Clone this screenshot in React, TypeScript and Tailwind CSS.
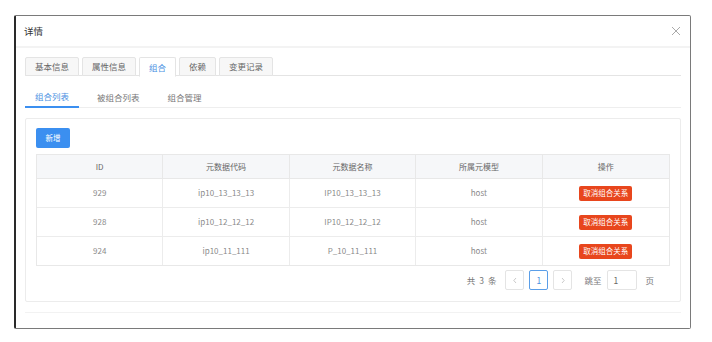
import React from "react";

const font = { fontFamily: '"Noto Sans CJK SC", "Noto Sans", sans-serif' };

const rows = [
  { id: "929", code: "ip10_13_13_13", name: "IP10_13_13_13", model: "host" },
  { id: "928", code: "ip10_12_12_12", name: "IP10_12_12_12", model: "host" },
  { id: "924", code: "ip10_11_111", name: "P_10_11_111", model: "host" },
];

const headers = ["ID", "元数据代码", "元数据名称", "所属元模型", "操作"];

export default function App() {
  return (
    <div className="w-[712px] h-[342px] bg-white overflow-hidden" style={font}>
      <div className="ml-[14px] mt-[15px] w-[677px] h-[314px] bg-white border border-[#7a7a7a] border-l-2 border-l-[#2a2a2a] rounded-[2px] flex flex-col">
        {/* header */}
        <div className="h-[32px] shrink-0 flex items-center justify-between pl-[8px] pr-[8px] border-b-2 border-[#f3f3f3]">
          <span className="text-[9.5px] text-[#333]">详情</span>
          <svg width="10" height="10" viewBox="0 0 10 10" className="mr-[1px]">
            <path d="M1 1 L9 9 M9 1 L1 9" stroke="#aaa" strokeWidth="1" />
          </svg>
        </div>
        {/* body */}
        <div className="flex-1 px-[9px] pt-[9px] flex flex-col">
          {/* card tabs */}
          <div className="flex gap-[3px] border-b border-[#e4e4e4] h-[19px]">
            {["基本信息", "属性信息", "组合", "依赖", "变更记录"].map((t) => {
              const active = t === "组合";
              return (
                <div
                  key={t}
                  className={
                    active
                      ? "px-[9px] h-[20px] flex items-center text-[8.5px] text-[#4a90e2] bg-white border border-[#e4e4e4] border-b-white rounded-t-[2px]"
                      : "px-[9px] h-[19px] flex items-center text-[8.5px] text-[#666] bg-[#f7f7f7] border border-[#e4e4e4] rounded-t-[2px]"
                  }
                >
                  {t}
                </div>
              );
            })}
          </div>
          {/* sub tabs */}
          <div className="mt-[10px] flex gap-[8px] border-b border-[#eeeeee] h-[22px]">
            {["组合列表", "被组合列表", "组合管理"].map((t, i) => (
              <div
                key={t}
                className={
                  i === 0
                    ? "px-[10px] h-[22px] flex items-center text-[8.5px] text-[#4a90e2] border-b-2 border-[#3b8ff0]"
                    : "px-[10px] h-[22px] flex items-center text-[8.5px] text-[#777]"
                }
              >
                {t}
              </div>
            ))}
          </div>
          {/* card */}
          <div className="mt-[10px] h-[184px] border border-[#ececec] rounded-[2px] px-[10px] pt-[9px]">
            <button className="w-[34px] h-[20px] rounded-[2px] bg-[#3b8ff0] text-white text-[7.5px] flex items-center justify-center">
              新增
            </button>
            <div className="mt-[6px] border border-[#e8e8e8] text-[8px] text-[#8a8a8a]">
              <div className="grid grid-cols-5 h-[24px] bg-[#f6f7f9] border-b border-[#e8e8e8]">
                {headers.map((h, i) => (
                  <div
                    key={h}
                    className={
                      "flex items-center justify-center text-[#666] " +
                      (i < 4 ? "border-r border-[#e8e8e8]" : "")
                    }
                  >
                    {h}
                  </div>
                ))}
              </div>
              {rows.map((r, ri) => (
                <div
                  key={r.id}
                  className={
                    ri < 2
                      ? "grid grid-cols-5 h-[29px] border-b border-[#ececec]"
                      : "grid grid-cols-5 h-[28px]"
                  }
                >
                  <div className="flex items-center justify-center border-r border-[#ececec]">{r.id}</div>
                  <div className="flex items-center justify-center border-r border-[#ececec]">{r.code}</div>
                  <div className="flex items-center justify-center border-r border-[#ececec]">{r.name}</div>
                  <div className="flex items-center justify-center border-r border-[#ececec]">{r.model}</div>
                  <div className="flex items-center justify-center">
                    <span className="h-[15px] px-[4px] rounded-[2px] bg-[#e8461d] text-white text-[7.5px] flex items-center">
                      取消组合关系
                    </span>
                  </div>
                </div>
              ))}
            </div>
            {/* pagination */}
            <div className="mt-[4px] h-[20px] flex items-center justify-end pr-[16px] text-[8.5px] text-[#777]">
              <span className="mr-[9px] flex gap-[4px]">
                <span>共</span>
                <span>3</span>
                <span>条</span>
              </span>
              <span className="w-[19px] h-[20px] border border-[#e4e4e4] rounded-[2px] flex items-center justify-center">
                <svg width="6" height="7" viewBox="0 0 6 7">
                  <path d="M4 1 L1.8 3.5 L4 6" stroke="#bbb" strokeWidth="0.8" fill="none" />
                </svg>
              </span>
              <span className="ml-[5px] w-[19px] h-[20px] border border-[#5a9ee8] rounded-[2px] flex items-center justify-center text-[#4a90e2]">
                1
              </span>
              <span className="ml-[5px] w-[19px] h-[20px] border border-[#e4e4e4] rounded-[2px] flex items-center justify-center">
                <svg width="6" height="7" viewBox="0 0 6 7">
                  <path d="M2 1 L4.2 3.5 L2 6" stroke="#bbb" strokeWidth="0.8" fill="none" />
                </svg>
              </span>
              <span className="ml-[12px]">跳至</span>
              <span className="ml-[6px] w-[30px] h-[20px] border border-[#e4e4e4] rounded-[2px] flex items-center pl-[5px] text-[#666]">
                1
              </span>
              <span className="ml-[8px]">页</span>
            </div>
          </div>
          <div className="mt-[10px] border-t border-[#f2f2f2] flex-1" />
        </div>
      </div>
    </div>
  );
}
